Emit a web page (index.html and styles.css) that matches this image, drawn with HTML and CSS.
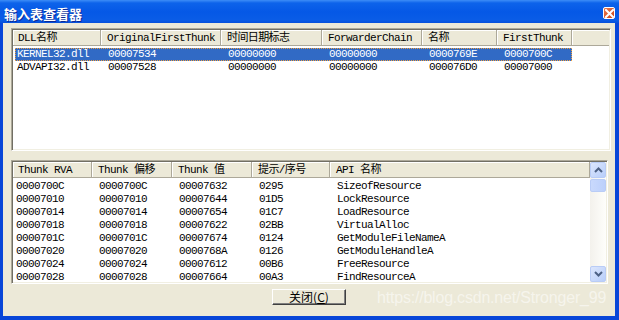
FILE: index.html
```html
<!DOCTYPE html>
<html>
	<head>
		<meta charset="utf-8">
		<title>输入表查看器</title>
		<link rel="stylesheet" href="styles.css">
	</head>
	<body>
		<div class="window">
			<!-- 标题栏 -->
			<div class="titlebar">
				<span class="title">输入表查看器</span>
				<span class="btn-close">
					<svg width="9" height="9" viewBox="0 0 9 9"><path d="M1 1 L8 8 M8 1 L1 8" stroke="#fff" stroke-width="2" stroke-linecap="square"/></svg>
				</span>
			</div>
			<div class="client">
				<!-- DLL 列表 -->
				<div class="list list-dll">
					<div class="lv-head">
						<div class="hd">DLL名称</div>
						<div class="hd">OriginalFirstThunk</div>
						<div class="hd">时间日期标志</div>
						<div class="hd">ForwarderChain</div>
						<div class="hd">名称</div>
						<div class="hd">FirstThunk</div>
						<div class="hd hd-fill"></div>
					</div>
					<div class="lv-row sel">
						<div>KERNEL32.dll</div><div>00007534</div><div>00000000</div><div>00000000</div><div>0000769E</div><div>0000700C</div>
					</div>
					<div class="lv-row">
						<div>ADVAPI32.dll</div><div>00007528</div><div>00000000</div><div>00000000</div><div>000076D0</div><div>00007000</div>
					</div>
				</div>
				<!-- API 列表 -->
				<div class="list list-api">
					<div class="lv-main">
						<div class="lv-head">
							<div class="hd">Thunk RVA</div>
							<div class="hd">Thunk 偏移</div>
							<div class="hd">Thunk 值</div>
							<div class="hd">提示/序号</div>
							<div class="hd">API 名称</div>
						</div>
						<div class="lv-row"><div>0000700C</div><div>0000700C</div><div>00007632</div><div>0295</div><div>SizeofResource</div></div>
						<div class="lv-row"><div>00007010</div><div>00007010</div><div>00007644</div><div>01D5</div><div>LockResource</div></div>
						<div class="lv-row"><div>00007014</div><div>00007014</div><div>00007654</div><div>01C7</div><div>LoadResource</div></div>
						<div class="lv-row"><div>00007018</div><div>00007018</div><div>00007622</div><div>02BB</div><div>VirtualAlloc</div></div>
						<div class="lv-row"><div>0000701C</div><div>0000701C</div><div>00007674</div><div>0124</div><div>GetModuleFileNameA</div></div>
						<div class="lv-row"><div>00007020</div><div>00007020</div><div>0000768A</div><div>0126</div><div>GetModuleHandleA</div></div>
						<div class="lv-row"><div>00007024</div><div>00007024</div><div>00007612</div><div>00B6</div><div>FreeResource</div></div>
						<div class="lv-row"><div>00007028</div><div>00007028</div><div>00007664</div><div>00A3</div><div>FindResourceA</div></div>
					</div>
					<div class="vscroll">
						<div class="sb-btn">
							<svg width="9" height="6" viewBox="0 0 9 6"><path d="M1 5 L4.5 1.5 L8 5" fill="none" stroke="#4D6185" stroke-width="2"/></svg>
						</div>
						<div class="sb-thumb"></div>
						<div class="sb-track"></div>
						<div class="sb-btn">
							<svg width="9" height="6" viewBox="0 0 9 6"><path d="M1 1 L4.5 4.5 L8 1" fill="none" stroke="#4D6185" stroke-width="2"/></svg>
						</div>
					</div>
				</div>
				<div class="btn-row">
					<div class="btn">关闭(<u>C</u>)</div>
				</div>
				<div class="watermark">https://blog.csdn.net/Stronger_99</div>
			</div>
		</div>
	</body>
</html>
```

FILE: styles.css
```css
*{
	margin: 0;
	padding: 0;
	box-sizing: border-box;
}
body{
	width: 619px;
	height: 320px;
	overflow: hidden;
	background: #0A5FE8;
}
.window{
	width: 619px;
	height: 320px;
	display: flex;
	flex-direction: column;
	background: #0846D8;
}
/* 标题栏 */
.titlebar{
	height: 23px;
	padding: 3px 4px 0 4px;
	display: flex;
	align-items: center;
	justify-content: space-between;
	background: linear-gradient(#3D8DF7 0, #0D63EA 3px, #0558E6 12px, #0A5CE6 20px, #0650DC 23px);
}
.title{
	font-family: "Noto Sans CJK SC", sans-serif;
	font-size: 13px;
	font-weight: bold;
	color: #fff;
	text-shadow: 1px 1px #0A2A96;
}
.btn-close{
	width: 12px;
	height: 12px;
	border: 1px solid #fff;
	border-radius: 2px;
	background: linear-gradient(135deg, #E8784E, #CC4418);
	display: flex;
	align-items: center;
	justify-content: center;
}
.client{
	flex: 1;
	margin: 0 4px 4px 3px;
	padding: 5px 4px 0 8px;
	background: #ECE9D8;
	display: flex;
	flex-direction: column;
	position: relative;
}
/* 列表 */
.list{
	background: #fff;
	border: 1px solid;
	border-color: #ACA899 #fff #fff #ACA899;
	box-shadow: inset 1px 1px #716F64, inset -1px -1px #F1EFE2;
	padding: 1px;
	font-family: "Liberation Mono", "Noto Sans CJK SC", monospace;
	font-size: 11px;
	letter-spacing: -0.6px;
	color: #000;
	overflow: hidden;
}
.list-dll{
	width: 600px;
	height: 123px;
}
.list-api{
	width: 597px;
	height: 124px;
	margin-top: 9px;
	display: flex;
}
.lv-main{
	width: 577px;
}
.lv-head{
	display: grid;
	height: 16px;
	margin-bottom: 1px;
}
.list-dll .lv-head{
	grid-template-columns: 88px 120px 101px 100px 75px 75px 1fr;
	margin-bottom: 2px;
}
.list-api .lv-head, .list-api .lv-row{
	grid-template-columns: 79px 80px 80px 78px 260px;
}
.hd{
	background: #ECE9D8;
	border-right: 1px solid #ACA899;
	border-bottom: 1px solid #ACA899;
	box-shadow: inset 1px 1px #fff;
	line-height: 16px;
	padding-left: 6px;
	white-space: nowrap;
	overflow: hidden;
}
.hd:first-child{
	padding-left: 5px;
}
.hd-fill{
	border-right: 0;
}
.lv-row{
	display: grid;
	height: 13px;
	line-height: 14px;
	white-space: nowrap;
}
.lv-row div{
	padding-left: 7px;
	overflow: hidden;
}
.lv-row div:first-child{
	padding-left: 3px;
}
.list-dll .lv-row{
	grid-template-columns: 86px 120px 101px 100px 75px 75px;
	width: 557px;
	margin-left: 2px;
	line-height: 13px;
}
.list-dll .lv-row div:first-child{
	padding-left: 2px;
}
.lv-row.sel{
	background: #316AC5;
	color: #fff;
	outline: 1px dotted #F0A040;
	outline-offset: -1px;
}
/* 滚动条 */
.vscroll{
	width: 16px;
	display: flex;
	flex-direction: column;
	background: linear-gradient(90deg, #F3F1EC, #FEFEFB);
}
.sb-btn{
	height: 16px;
	border: 1px solid #B9CCF6;
	border-radius: 2px;
	background: linear-gradient(135deg, #DCE6FD, #B8CEFA);
	display: flex;
	align-items: center;
	justify-content: center;
}
.sb-thumb{
	height: 13px;
	margin-top: 1px;
	border: 1px solid #B9CCF6;
	border-radius: 2px;
	background: linear-gradient(90deg, #C9D9FC, #BCD0FB);
}
.sb-track{
	flex: 1;
}
/* 按钮 */
.btn-row{
	margin-top: 5px;
	display: flex;
	justify-content: center;
	padding-right: 4px;
}
.btn{
	width: 74px;
	height: 16px;
	border: 1px solid;
	border-color: #fff #404040 #404040 #fff;
	box-shadow: inset -1px -1px #808080;
	background: #ECE9D8;
	font-family: "Noto Sans CJK SC", sans-serif;
	font-size: 12px;
	line-height: 14px;
	text-align: center;
	color: #000;
}
.watermark{
	position: absolute;
	left: 374px;
	top: 266px;
	font-family: "Liberation Sans", sans-serif;
	font-size: 16px;
	color: rgba(255,255,255,.55);
	white-space: nowrap;
	letter-spacing: -0.2px;
}
```
